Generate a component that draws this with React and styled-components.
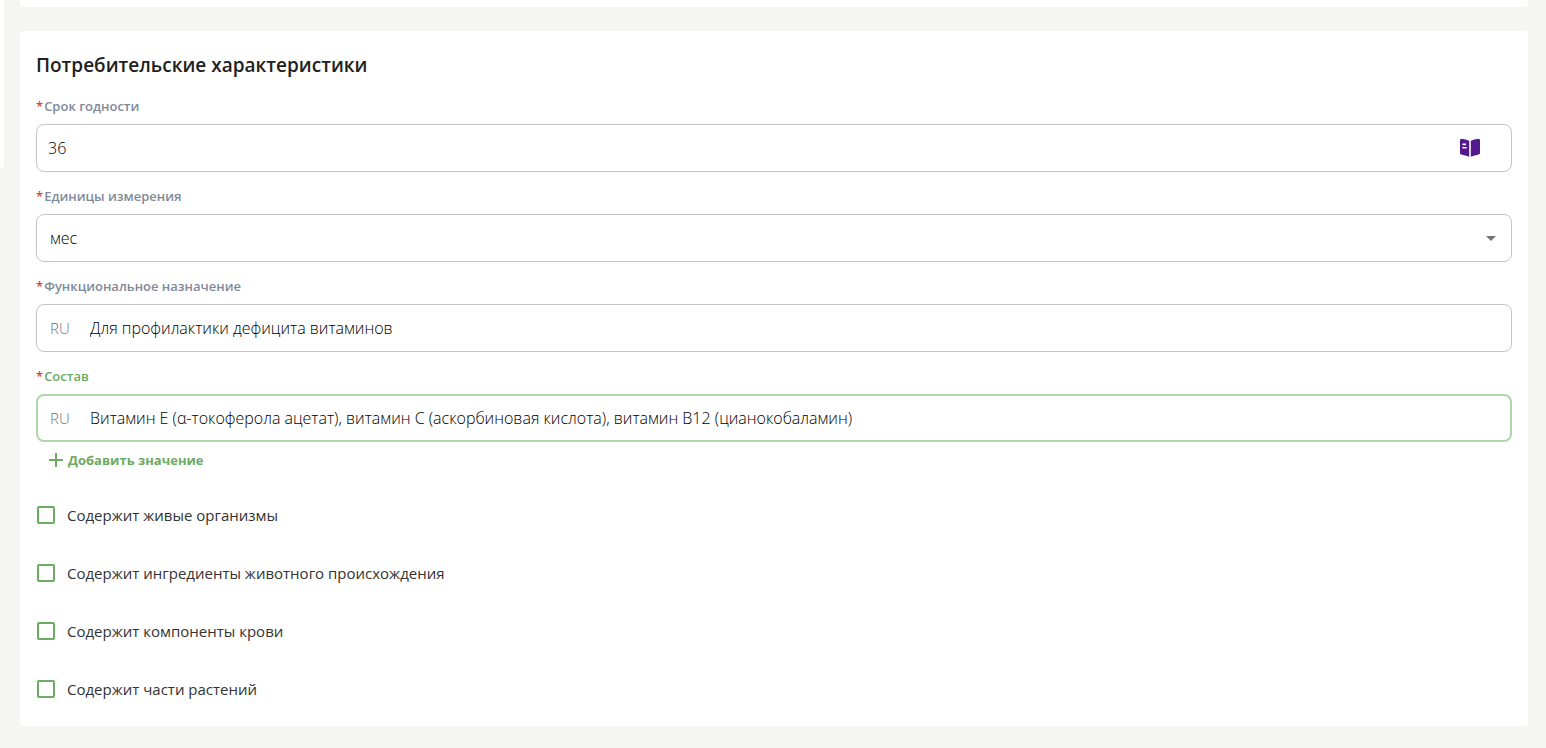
import React, { useState } from "react";
import styled, { createGlobalStyle } from "styled-components";

const GlobalStyle = createGlobalStyle`
  *, *::before, *::after {
    box-sizing: border-box;
  }

  body {
    margin: 0;
    background: #f5f5f3;
    color: #000;
    font-family: "Open Sans", "Noto Sans", sans-serif;
    font-size: 16px;
    font-weight: 300;
  }
`;

const Page = styled.div`
  display: flex;
  align-items: flex-start;
  gap: 16px;
  padding: 0 18px 22px 0;
`;

const SideEdge = styled.aside`
  flex: none;
  width: 4px;
  height: 168px;
  background: #fff;
  border-bottom-right-radius: 8px;
`;

const Main = styled.main`
  display: flex;
  flex: 1;
  flex-direction: column;
  gap: 24px;
  min-width: 0;
`;

const PreviousCard = styled.div`
  height: 7px;
  background: #fff;
  border-radius: 0 0 4px 4px;
`;

const Card = styled.section`
  padding: 20px 16px 22px;
  background: #fff;
  border-radius: 4px;
`;

const Title = styled.h2`
  margin: 0 0 18px;
  color: #212121;
  font-size: 19px;
  font-weight: 600;
  line-height: 28px;
`;

const Fields = styled.div`
  display: flex;
  flex-direction: column;
  gap: 15px;
`;

const Field = styled.div`
  display: flex;
  flex-direction: column;
  gap: 9px;
`;

const Label = styled.label`
  display: flex;
  gap: 1px;
  color: ${({ $active }) => ($active ? "#6aac61" : "#7f8a99")};
  font-size: 13px;
  font-weight: 600;
  line-height: 18px;
`;

const Required = styled.span`
  color: #d9443a;
`;

const Box = styled.div`
  position: relative;
  display: flex;
  align-items: center;
  height: 48px;
  border: ${({ $active }) => ($active ? "2px solid #afd6aa" : "1px solid #c4c4c4")};
  border-radius: 8px;
`;

const Lang = styled.span`
  flex: none;
  width: ${({ $active }) => ($active ? "52px" : "53px")};
  padding-left: ${({ $active }) => ($active ? "12px" : "13px")};
  color: #66717f;
  font-size: 15px;
`;

const Input = styled.input`
  flex: 1;
  min-width: 0;
  height: 100%;
  padding: 0 0 0 ${({ $plain }) => ($plain ? "11px" : "0")};
  border: 0;
  outline: 0;
  background: transparent;
  color: inherit;
  font: inherit;
`;

const Select = styled.select`
  width: 100%;
  height: 100%;
  padding: 0 32px 0 13px;
  border: 0;
  outline: 0;
  appearance: none;
  background: transparent;
  color: inherit;
  font: inherit;
`;

const Arrow = styled.svg`
  position: absolute;
  right: 8px;
  pointer-events: none;
`;

const BookButton = styled.button`
  display: flex;
  margin-right: 30px;
  padding: 0;
  border: 0;
  background: transparent;
  cursor: pointer;
`;

const AddButton = styled.button`
  display: flex;
  align-items: center;
  gap: 4px;
  margin: 9px 0 0 12px;
  padding: 0;
  border: 0;
  background: transparent;
  color: #6aac61;
  font: inherit;
  font-size: 13px;
  font-weight: 700;
  line-height: 18px;
  cursor: pointer;
`;

const Checks = styled.div`
  display: flex;
  flex-direction: column;
  gap: 28px;
  margin-top: 31px;
`;

const CheckLabel = styled.label`
  display: flex;
  align-items: center;
  gap: 12px;
  height: 30px;
  padding-left: 1px;
  color: #333;
  font-size: 15px;
  font-weight: 400;
`;

const Checkbox = styled.input`
  width: 18px;
  height: 18px;
  margin: 0;
  appearance: none;
  border: 2px solid #6aac61;
  border-radius: 2px;

  &:checked {
    background: #6aac61;
  }
`;

const checks = [
  "Содержит живые организмы",
  "Содержит ингредиенты животного происхождения",
  "Содержит компоненты крови",
  "Содержит части растений",
];

function FieldLabel({ id, active, children }) {
  return (
    <Label htmlFor={id} $active={active}>
      <Required>*</Required>
      {children}
    </Label>
  );
}

function TextField({ id, label, value, active }) {
  const [text, setText] = useState(value);
  return (
    <Field>
      <FieldLabel id={id} active={active}>{label}</FieldLabel>
      <Box $active={active}>
        <Lang $active={active}>RU</Lang>
        <Input id={id} value={text} onChange={(e) => setText(e.target.value)} />
      </Box>
    </Field>
  );
}

function BookIcon() {
  return (
    <svg width="22" height="20" viewBox="0 0 22 20" fill="#54198c">
      <path d="M1 2.4Q1 .6 2.6 .8Q6.6 1.1 10.2 2.8V18.8Q6.4 17.2 2.2 16.5Q1 16.3 1 15.2ZM3.4 5.6V7.2H7V5.6ZM3.4 9V10.6H7.6V9Z" fillRule="evenodd" />
      <path d="M21 2.4Q21 .6 19.4 .8Q15.4 1.1 11.8 2.8V18.8Q15.6 17.2 19.8 16.5Q21 16.3 21 15.2Z" />
    </svg>
  );
}

function App() {
  const [shelfLife, setShelfLife] = useState("36");
  return (
    <>
      <GlobalStyle />
      <Page>
        <SideEdge />
        <Main>
          <PreviousCard />
          <Card>
            <Title>Потребительские характеристики</Title>
            <Fields>
              <Field>
                <FieldLabel id="shelf-life">Срок годности</FieldLabel>
                <Box>
                  <Input id="shelf-life" $plain value={shelfLife} onChange={(e) => setShelfLife(e.target.value)} />
                  <BookButton type="button" aria-label="Справочник">
                    <BookIcon />
                  </BookButton>
                </Box>
              </Field>
              <Field>
                <FieldLabel id="unit">Единицы измерения</FieldLabel>
                <Box>
                  <Select id="unit" defaultValue="month">
                    <option value="month">мес</option>
                  </Select>
                  <Arrow width="24" height="24" viewBox="0 0 24 24" fill="#757575">
                    <path d="M7 10l5 5 5-5z" />
                  </Arrow>
                </Box>
              </Field>
              <TextField id="purpose" label="Функциональное назначение" value="Для профилактики дефицита витаминов" />
              <TextField
                id="composition"
                label="Состав"
                value="Витамин Е (α-токоферола ацетат), витамин С (аскорбиновая кислота), витамин В12 (цианокобаламин)"
                active
              />
            </Fields>
            <AddButton type="button">
              <svg width="16" height="16" viewBox="0 0 16 16" fill="#6aac61">
                <path d="M7 1h2v6h6v2H9v6H7V9H1V7h6z" />
              </svg>
              Добавить значение
            </AddButton>
            <Checks>
              {checks.map((text) => (
                <CheckLabel key={text}>
                  <Checkbox type="checkbox" />
                  {text}
                </CheckLabel>
              ))}
            </Checks>
          </Card>
        </Main>
      </Page>
    </>
  );
}

export default App;
